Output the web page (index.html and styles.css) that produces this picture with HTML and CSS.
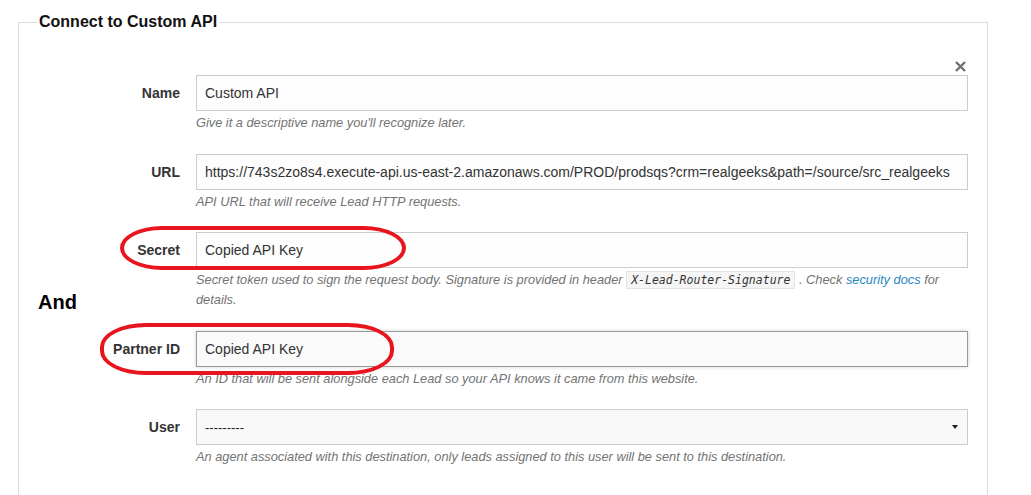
FILE: index.html
```html
<!DOCTYPE html>
<html>
<head>
  <title>Connect to Custom API</title>
  <link rel="stylesheet" href="styles.css">
</head>
<body>
  <div class="page">
    <fieldset class="panel">
      <legend>Connect to Custom API</legend>
      <div class="close-row">
        <button class="close" title="Remove">
          <svg width="11" height="11" viewBox="0 0 11 11"><path d="M1 1 L10 10 M10 1 L1 10" stroke="#6f6f6f" stroke-width="2.4" fill="none"/></svg>
        </button>
      </div>

      <div class="group">
        <label for="name">Name</label>
        <input id="name" type="text" value="Custom API">
        <p class="help">Give it a descriptive name you'll recognize later.</p>
      </div>

      <div class="group">
        <label for="url">URL</label>
        <input id="url" type="text" value="https://743s2zo8s4.execute-api.us-east-2.amazonaws.com/PROD/prodsqs?crm=realgeeks&amp;path=/source/src_realgeeks">
        <p class="help">API URL that will receive Lead HTTP requests.</p>
      </div>

      <div class="group">
        <span class="circle circle-secret"></span>
        <label for="secret">Secret</label>
        <input id="secret" type="text" value="Copied API Key">
        <p class="help">Secret token used to sign the request body. Signature is provided in header <code>X-Lead-Router-Signature</code> . Check <a href="#">security docs</a> for details.</p>
        <span class="and">And</span>
      </div>

      <div class="group">
        <span class="circle circle-partner"></span>
        <label for="partner">Partner ID</label>
        <input id="partner" class="focused" type="text" value="Copied API Key">
        <p class="help">An ID that will be sent alongside each Lead so your API knows it came from this website.</p>
      </div>

      <div class="group">
        <label for="user">User</label>
        <div class="select-wrap">
          <select id="user">
            <option>---------</option>
          </select>
          <span class="caret"></span>
        </div>
        <p class="help">An agent associated with this destination, only leads assigned to this user will be sent to this destination.</p>
      </div>
    </fieldset>
  </div>
</body>
</html>
```

FILE: styles.css
```css
body {
  margin: 0;
  font-family: "Liberation Sans", Arial, sans-serif;
  color: #333;
  background: #fff;
}

.page {
  padding: 13px 43px 0 18px;
}

.panel {
  margin: 0;
  padding: 0 19px 40px 0;
  border: 1px solid #ddd;
  border-bottom: none;
  min-width: 0;
}

.panel legend {
  margin-left: 18px;
  padding: 0 2px;
  font-size: 16px;
  line-height: 18px;
  font-weight: bold;
  color: #111;
}

.close-row {
  display: flex;
  justify-content: flex-end;
  margin-top: 29px;
  height: 15px;
}

.close {
  border: none;
  background: none;
  padding: 0 2px 0 0;
  margin: 0;
  height: 11px;
  cursor: pointer;
}

.group {
  position: relative;
  display: grid;
  grid-template-columns: 161px 1fr;
  column-gap: 16px;
  margin-bottom: 20.5px;
}

.group label {
  grid-column: 1;
  text-align: right;
  font-size: 14px;
  font-weight: bold;
  line-height: 36px;
  color: #333;
  position: relative;
  z-index: 1;
}

.group input,
.select-wrap {
  grid-column: 2;
}

.group input,
.group select {
  box-sizing: border-box;
  width: 100%;
  height: 36px;
  margin: 0;
  padding: 0 8px;
  border: 1px solid #ccc;
  background: #fdfdfd;
  font-family: "Liberation Sans", Arial, sans-serif;
  font-size: 14px;
  color: #333;
  outline: none;
}

.group input.focused {
  border-color: #999;
  background: #fafafa;
  box-shadow: 0 0 4px rgba(0, 0, 0, 0.18);
}

.select-wrap {
  position: relative;
}

.group select {
  appearance: none;
  -webkit-appearance: none;
  background: #f9f9f9;
  color: #222;
  font-size: 13px;
}

.caret {
  position: absolute;
  right: 10px;
  top: 16px;
  width: 0;
  height: 0;
  border-left: 3px solid transparent;
  border-right: 3px solid transparent;
  border-top: 4px solid #222;
}

.help {
  grid-column: 2;
  margin: 2px 0 0;
  font-size: 12.8px;
  line-height: 20px;
  font-style: italic;
  color: #737373;
}

.help code {
  font-family: "DejaVu Sans Mono", monospace;
  font-size: 11.5px;
  color: #333;
  background: #f5f5f5;
  border: 1px solid #e3e3e3;
  padding: 1px 4px;
}

.help a {
  color: #2a87c2;
  text-decoration: none;
}

.circle {
  position: absolute;
  border: 4px solid #e8141e;
  border-radius: 46px / 24px;
  pointer-events: none;
  z-index: 2;
}

.circle-secret {
  left: 101px;
  top: -6px;
  width: 278px;
  height: 36px;
}

.circle-partner {
  left: 81px;
  top: -8px;
  width: 286px;
  height: 44px;
}

.and {
  position: absolute;
  left: 19px;
  top: 59px;
  font-size: 20px;
  font-weight: bold;
  color: #000;
}
```
